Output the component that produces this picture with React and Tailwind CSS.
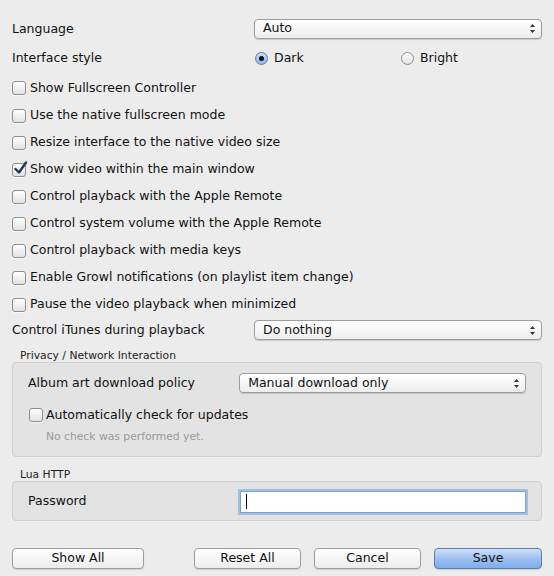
import React from 'react';

const font = { fontFamily: '"DejaVu Sans", "Liberation Sans", sans-serif' };

const Checkbox = ({ checked }) => (
  <span className="relative inline-block w-[14px] h-[14px] shrink-0 rounded-[3px] border border-[#8e8e8e] bg-gradient-to-b from-white to-[#e2e2e2] shadow-[0_1px_0_rgba(255,255,255,0.6)]">
    {checked && (
      <svg className="absolute left-[0px] top-[-3px]" width="15" height="15" viewBox="0 0 15 15">
        <path d="M2.5 8 L6 11.5 L13 1.5" fill="none" stroke="#1d3560" strokeWidth="2.4" strokeLinecap="round" strokeLinejoin="round" />
      </svg>
    )}
  </span>
);

const CheckRow = ({ label, checked, first }) => (
  <div className={`flex items-center ${first ? 'h-[28px]' : 'h-[27px]'}`}>
    <Checkbox checked={checked} />
    <span className="ml-[4px]">{label}</span>
  </div>
);

const Radio = ({ checked }) => (
  <span
    className={`relative inline-flex items-center justify-center w-[13px] h-[13px] rounded-full border ${
      checked
        ? 'border-[#5a7fb3] bg-gradient-to-b from-[#c9dcf5] to-[#8fb4e8]'
        : 'border-[#8e8e8e] bg-gradient-to-b from-white to-[#e2e2e2]'
    }`}
  >
    {checked && <span className="w-[5px] h-[5px] rounded-full bg-[#111]" />}
  </span>
);

const Popup = ({ value, className }) => (
  <div
    className={`flex items-center justify-between h-[20px] rounded-[4px] border border-[#9d9d9d] bg-gradient-to-b from-white to-[#ededed] shadow-[0_1px_1px_rgba(0,0,0,0.15)] pl-[8px] pr-[5px] ${className}`}
  >
    <span>{value}</span>
    <svg width="7" height="11" viewBox="0 0 7 11">
      <path d="M3.5 1 L6 4 L1 4 Z" fill="#333" />
      <path d="M3.5 10 L6 7 L1 7 Z" fill="#333" />
    </svg>
  </div>
);

const Button = ({ label, className, primary }) => (
  <button
    className={`h-[21px] rounded-[4px] border text-[12.5px] shadow-[0_1px_1px_rgba(0,0,0,0.12)] ${
      primary
        ? 'border-[#5b7fb5] bg-gradient-to-b from-[#cfe0f8] via-[#9ec0ef] to-[#7fadee]'
        : 'border-[#9d9d9d] bg-gradient-to-b from-white to-[#ececec]'
    } ${className}`}
  >
    {label}
  </button>
);

const checks = [
  ['Show Fullscreen Controller', false],
  ['Use the native fullscreen mode', false],
  ['Resize interface to the native video size', false],
  ['Show video within the main window', true],
  ['Control playback with the Apple Remote', false],
  ['Control system volume with the Apple Remote', false],
  ['Control playback with media keys', false],
  ['Enable Growl notifications (on playlist item change)', false],
  ['Pause the video playback when minimized', false],
];

export default function App() {
  return (
    <div className="w-[554px] h-[576px] bg-[#ececec] text-[12.5px] text-[#111] px-[12px] pt-[16px] overflow-hidden" style={font}>
      <div className="flex items-center h-[25px]">
        <span className="w-[242px] pt-[1px]">Language</span>
        <Popup value="Auto" className="w-[288px]" />
      </div>
      <div className="flex items-center h-[33px] pt-[1px]">
        <span className="w-[243px]">Interface style</span>
        <div className="flex items-center w-[146px]">
          <Radio checked />
          <span className="ml-[6px]">Dark</span>
        </div>
        <div className="flex items-center">
          <Radio />
          <span className="ml-[6px]">Bright</span>
        </div>
      </div>
      {checks.map(([label, checked], i) => (
        <CheckRow key={label} label={label} checked={checked} first={i === 0} />
      ))}
      <div className="flex items-center h-[24px]">
        <span className="w-[242px]">Control iTunes during playback</span>
        <Popup value="Do nothing" className="w-[288px]" />
      </div>

      <div className="mt-[8px] pl-[8px] text-[10.75px] leading-[12px] text-[#222]">Privacy / Network Interaction</div>
      <div className="h-[95px] rounded-[4px] border border-[#cfcfcf] bg-[#e3e3e3] pt-[7px] pl-[15px] pr-[15px]">
        <div className="flex items-center h-[26px]">
          <span className="w-[212px]">Album art download policy</span>
          <Popup value="Manual download only" className="w-[288px]" />
        </div>
        <div className="flex items-center h-[26px] mt-[6px] pl-[1px]">
          <Checkbox />
          <span className="ml-[3px]">Automatically check for updates</span>
        </div>
        <div className="pl-[18px] mt-[2px] text-[10.75px] leading-[14px] text-[#9a9a9a]">No check was performed yet.</div>
      </div>

      <div className="mt-[12px] pl-[8px] text-[10.75px] leading-[12px] text-[#222]">Lua HTTP</div>
      <div className="h-[40px] rounded-[4px] border border-[#cfcfcf] bg-[#e3e3e3] pl-[15px] pr-[15px] pt-[1px] flex items-center">
        <span className="w-[212px]">Password</span>
        <div className="w-[287px] h-[22px] bg-white border border-[#7aa3d8] shadow-[0_0_0_2px_rgba(120,160,220,0.55)] flex items-center pl-[5px]">
          <span className="w-[1px] h-[15px] bg-black" />
        </div>
      </div>

      <div className="flex mt-[27px]">
        <Button label="Show All" className="w-[132px]" />
        <Button label="Reset All" className="w-[107px] ml-[50px]" />
        <Button label="Cancel" className="w-[107px] ml-[13px]" />
        <Button label="Save" className="w-[108px] ml-[13px]" primary />
      </div>
    </div>
  );
}
